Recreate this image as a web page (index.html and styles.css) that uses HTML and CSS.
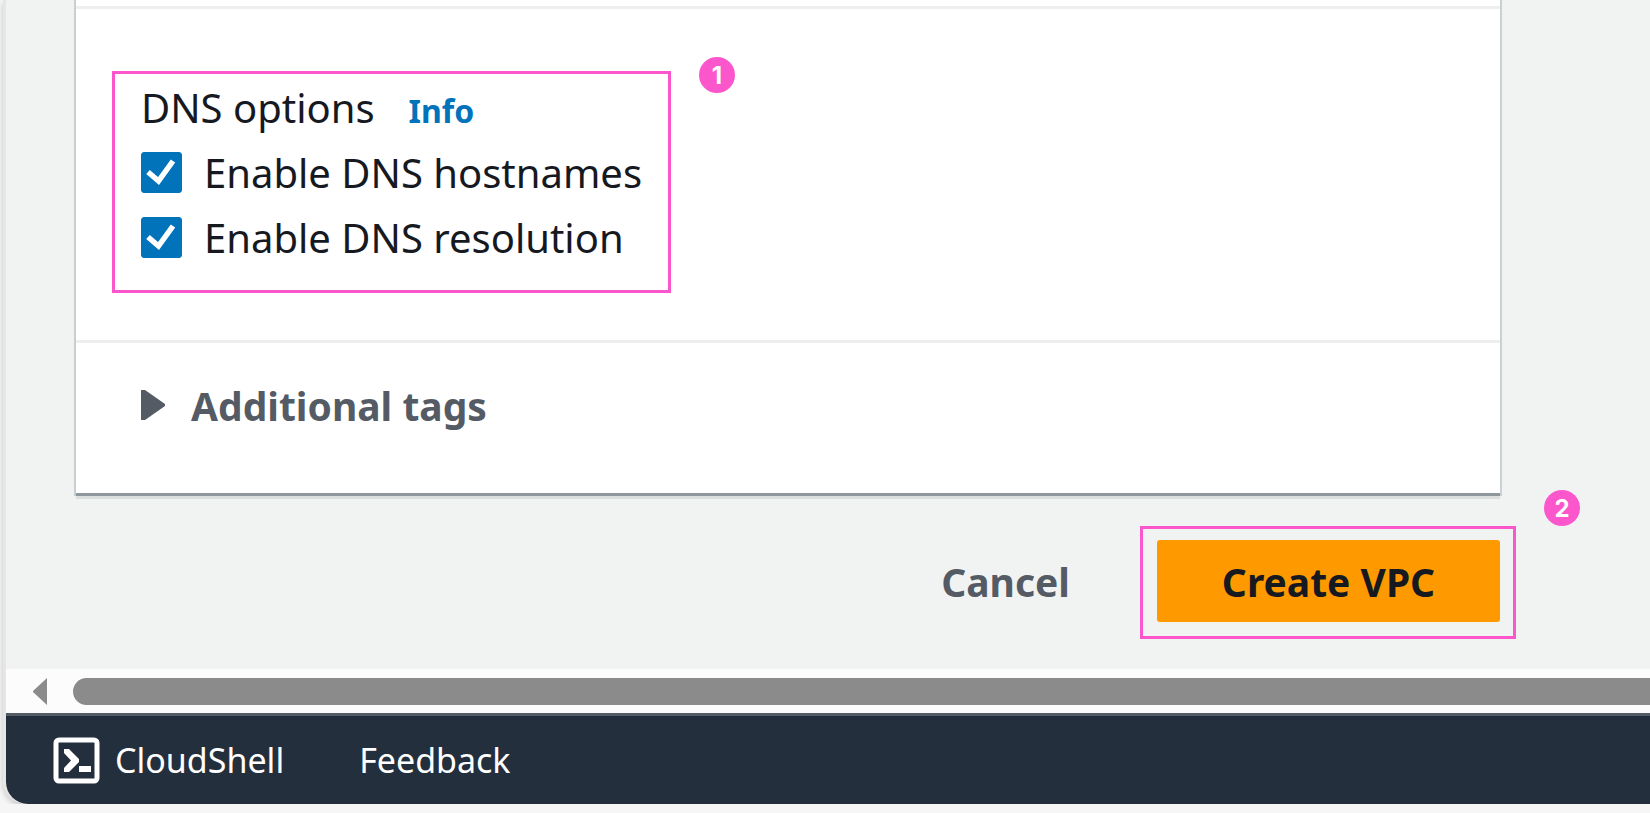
FILE: index.html
```html
<!DOCTYPE html>
<html lang="en">
<head>
<meta charset="utf-8">
<title>Create VPC</title>
<meta name="viewport" content="width=device-width, initial-scale=1">
<link rel="stylesheet" href="styles.css">
</head>
<body>
<div class="window">
  <main class="content">
    <div class="card">
      <section class="card-section card-section-top"></section>
      <section class="card-section dns-section">
        <div class="callout dns-callout">
          <div class="dns-heading"><span>DNS options</span><a class="info" href="#info">Info</a></div>
          <label class="option"><input type="checkbox" class="checkbox" checked><span>Enable DNS hostnames</span></label>
          <label class="option"><input type="checkbox" class="checkbox" checked><span>Enable DNS resolution</span></label>
          <span class="badge">1</span>
        </div>
      </section>
      <section class="card-section tags-section">
        <button type="button" class="expander">
          <svg class="caret" viewBox="0 0 24 30" aria-hidden="true"><path d="M0 0h4L24 14v2L4 30H0z"/></svg>
          <span>Additional tags</span>
        </button>
      </section>
    </div>
    <div class="actions">
      <button type="button" class="cancel">Cancel</button>
      <div class="callout create-callout">
        <button type="button" class="create">Create VPC</button>
        <span class="badge">2</span>
      </div>
    </div>
  </main>
  <div class="scrollbar">
    <svg class="scroll-arrow" viewBox="0 0 14 27" aria-hidden="true"><path d="M14 0v27L0 14v-1z"/></svg>
    <div class="scroll-thumb"></div>
  </div>
  <footer class="footer">
    <a class="footer-link" href="#cloudshell">
      <svg class="shell-icon" viewBox="0 0 47 47" aria-hidden="true">
        <rect class="shell-frame" x="3" y="3" width="41" height="41" rx="3"/>
        <path class="shell-prompt" d="M11 12h5l10 10v3L16 35h-5v-4l7-7.500-7-7.500z"/>
        <rect class="shell-prompt" x="26" y="29" width="12" height="6"/>
      </svg>
      <span>CloudShell</span>
    </a>
    <a class="footer-link" href="#feedback">Feedback</a>
  </footer>
</div>
</body>
</html>
```
FILE: styles.css
```css
* {
  box-sizing: border-box;
}

body {
  margin: 0;
  background: #f6f6f6;
  color: #16191f;
  font-family: "Noto Sans", "Open Sans", sans-serif;
  font-size: 40px;
  overflow-x: hidden;
}

button {
  border: 0;
  padding: 0;
  background: none;
  font: inherit;
  font-size: 39px;
  font-weight: 700;
  color: #545b64;
  cursor: pointer;
}

a {
  text-decoration: none;
}

.window {
  margin-left: 3px;
  border-left: 3px solid #e6e6e6;
  border-bottom-left-radius: 24px;
  box-shadow: 0 3px 6px rgba(0, 0, 0, 0.2);
}

.content {
  padding: 0 150px 30px 70px;
  background: #f1f3f3;
}

.card {
  background: #fff;
  border-bottom: 3px solid #8d979c;
  box-shadow: -2px 0 0 #c9ced0, 2px 0 0 #cbd1d3, 0 3px 0 #dbdedf;
}

.card-section + .card-section {
  border-top: 3px solid #eee;
}

.card-section-top {
  height: 6px;
}

.dns-section {
  display: flex;
  padding: 62px 36px 47px;
}

.callout {
  position: relative;
  border: 3px solid #fc56cd;
}

.dns-callout {
  padding: 1px 26px 20px;
}

.dns-heading,
.option {
  display: flex;
  align-items: center;
  height: 65px;
  white-space: nowrap;
}

.dns-heading {
  align-items: baseline;
  gap: 34px;
  line-height: 65px;
}

.info {
  color: #0073bb;
  font-size: 32px;
  font-weight: 700;
}

.option {
  gap: 22px;
}

.checkbox {
  appearance: none;
  width: 41px;
  height: 41px;
  margin: 0;
  border-radius: 3px;
  border: 1px solid #0073bb;
}

.checkbox:checked {
  background: #0073bb url("data:image/svg+xml,%3Csvg xmlns='http://www.w3.org/2000/svg' viewBox='0 0 41 41'%3E%3Cpath d='M7 20l10.500 9L32 9' fill='none' stroke='white' stroke-width='5.500'/%3E%3C/svg%3E") center / 41px 41px;
}

.badge {
  position: absolute;
  top: -17px;
  right: -67px;
  width: 36px;
  height: 36px;
  border-radius: 50%;
  background: #fc56cd;
  color: #fff;
  font: 700 24px/37px Inter, sans-serif;
  text-align: center;
}

.tags-section {
  padding: 30px 65px 56px;
}

.expander {
  display: flex;
  align-items: center;
  gap: 26px;
  height: 64px;
}

.caret {
  width: 24px;
  height: 30px;
  fill: #545b64;
}

.actions {
  display: flex;
  justify-content: flex-end;
  align-items: center;
  gap: 70px;
  margin: 30px -16px 0 0;
}

.cancel {
  padding-bottom: 3px;
}

.create-callout {
  padding: 11px 13px 14px 14px;
}

.create-callout .badge {
  top: -39px;
}

.create {
  display: block;
  width: 343px;
  height: 82px;
  border-radius: 3px;
  background: #ff9900;
  color: #16191f;
}

.scrollbar {
  display: flex;
  align-items: center;
  gap: 26px;
  height: 44px;
  padding-left: 27px;
  background: #fcfcfc;
}

.scroll-arrow {
  width: 14px;
  height: 27px;
  fill: #8b8b8b;
}

.scroll-thumb {
  flex: 1;
  height: 27px;
  border-radius: 14px 0 0 14px;
  background: #8b8b8b;
}

.footer {
  display: flex;
  align-items: center;
  gap: 75px;
  height: 91px;
  padding-left: 47px;
  border-top: 3px solid #545b64;
  border-bottom-left-radius: 22px;
  background: #242f3e;
  font-size: 34px;
}

.footer-link {
  display: flex;
  align-items: center;
  gap: 15px;
  color: #fff;
}

.shell-icon {
  width: 47px;
  height: 47px;
}

.shell-frame {
  fill: none;
  stroke: #fff;
  stroke-width: 5;
}

.shell-prompt {
  fill: #fff;
}
```
